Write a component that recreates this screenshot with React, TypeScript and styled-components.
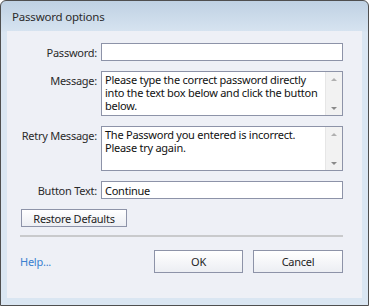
import * as React from "react";
import styled, { createGlobalStyle } from "styled-components";

const Global = createGlobalStyle`
  html, body {
    margin: 0;
    padding: 0;
    background: #ffffff;
  }
  * {
    box-sizing: border-box;
  }
`;

const Window = styled.div`
  width: 369px;
  height: 306px;
  border: 1px solid #4f4f4f;
  border-radius: 6px 6px 0 0;
  background: linear-gradient(to bottom, #bfd1e3 0px, #d6e3f0 30px, #dae6f2 31px, #dae6f2 100%);
  display: flex;
  flex-direction: column;
  font-family: "Noto Sans", "Open Sans", sans-serif;
  font-size: 11px;
  letter-spacing: -0.25px;
  color: #1e1e1e;
  overflow: hidden;
`;

const TitleBar = styled.div`
  height: 30px;
  flex: none;
  display: flex;
  align-items: center;
  padding-left: 11px;
  font-size: 11.5px;
  letter-spacing: -0.2px;
  color: #2b2b2b;
`;

const Frame = styled.div`
  flex: 1;
  padding: 0 6px 7px 6px;
  display: flex;
`;

const Panel = styled.div`
  flex: 1;
  background: #eef0f6;
  padding: 12px 19px 0 12px;
  display: flex;
  flex-direction: column;
`;

const Form = styled.div`
  display: grid;
  grid-template-columns: 78px 1fr;
  column-gap: 4px;
  row-gap: 10px;
`;

const Label = styled.label<{ $top?: boolean }>`
  text-align: right;
  white-space: nowrap;
  align-self: ${(p) => (p.$top ? "start" : "center")};
  padding-top: ${(p) => (p.$top ? "2px" : "0")};
  color: #2a2a2a;
`;

const Field = styled.div`
  height: 18px;
  border: 1px solid #8d93a8;
  background: #ffffff;
  padding: 0 3px;
  display: flex;
  align-items: center;
  white-space: nowrap;
  color: #111;
`;

const TextBox = styled.div`
  height: 45px;
  border: 1px solid #8d93a8;
  background: #ffffff;
  display: grid;
  grid-template-columns: 1fr 17px;
`;

const TextContent = styled.div`
  padding: 1px 3px 0 3px;
  line-height: 13px;
  color: #111;
`;

const ScrollBar = styled.div`
  background: #f2f2f2;
  border-left: 1px solid #e6e6e6;
  display: flex;
  flex-direction: column;
  justify-content: space-between;
  align-items: center;
  padding: 6px 0 5px;
`;

const Arrow = styled.div<{ $down?: boolean }>`
  width: 0;
  height: 0;
  border-left: 3px solid transparent;
  border-right: 3px solid transparent;
  ${(p) =>
    p.$down
      ? "border-top: 3px solid #8a8a8a;"
      : "border-bottom: 3px solid #b0b0b0;"}
`;

const Button = styled.button<{ $w: number }>`
  width: ${(p) => p.$w}px;
  border: 1px solid #8d93a8;
  background: linear-gradient(to bottom, #ffffff, #eceef3);
  font-family: inherit;
  font-size: 11px;
  letter-spacing: -0.25px;
  color: #1e1e1e;
  padding: 0;
  cursor: default;
`;

const RestoreRow = styled.div`
  margin-top: 10px;
  padding-left: 2px;
  display: flex;
  ${Button} {
    height: 18px;
  }
`;

const Separator = styled.div`
  margin: 8px 0 0 1px;
  height: 2px;
  background: #c9cacc;
`;

const Footer = styled.div`
  margin-top: 13px;
  padding-left: 1px;
  display: flex;
  align-items: center;
  gap: 10px;
  ${Button} {
    height: 23px;
  }
`;

const HelpLink = styled.a`
  color: #3b80d0;
  text-decoration: none;
  margin-right: auto;
  font-size: 11px;
`;

type TextAreaProps = { text: string };
const TextArea: React.FC<TextAreaProps> = ({ text }) => (
  <TextBox>
    <TextContent>{text}</TextContent>
    <ScrollBar>
      <Arrow />
      <Arrow $down />
    </ScrollBar>
  </TextBox>
);

const App: React.FC = () => {
  return (
    <>
      <Global />
      <Window>
        <TitleBar>Password options</TitleBar>
        <Frame>
          <Panel>
            <Form>
              <Label>Password:</Label>
              <Field />
              <Label $top>Message:</Label>
              <TextArea text="Please type the correct password directly into the text box below and click the button below." />
              <Label $top>Retry Message:</Label>
              <TextArea text="The Password you entered is incorrect. Please try again." />
              <Label>Button Text:</Label>
              <Field>Continue</Field>
            </Form>
            <RestoreRow>
              <Button $w={106}>Restore Defaults</Button>
            </RestoreRow>
            <Separator />
            <Footer>
              <HelpLink href="#">Help...</HelpLink>
              <Button $w={89}>OK</Button>
              <Button $w={90}>Cancel</Button>
            </Footer>
          </Panel>
        </Frame>
      </Window>
    </>
  );
};

export default App;
